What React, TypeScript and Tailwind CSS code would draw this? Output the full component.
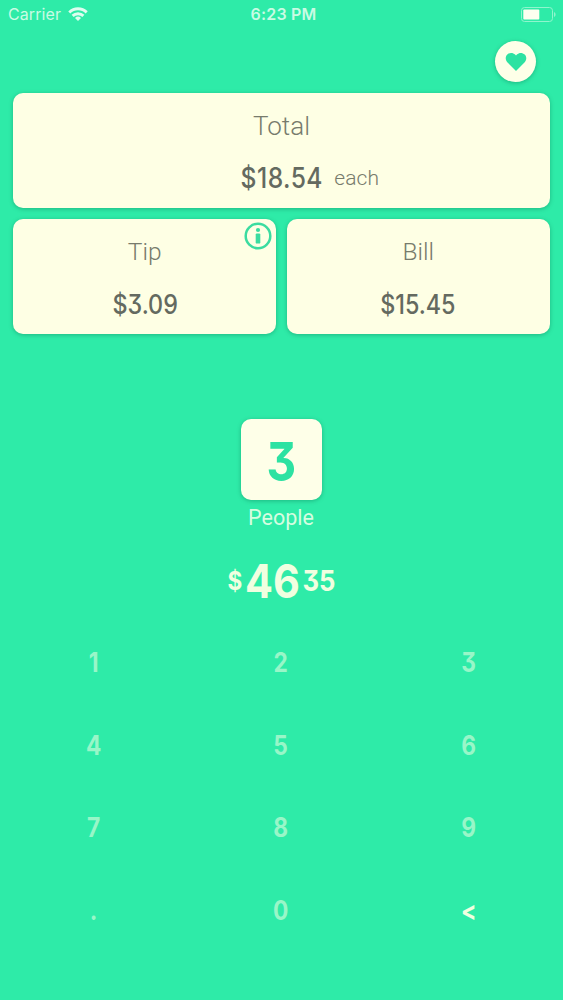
import React from "react";
import clsx from "clsx";

type AmountCardProps = {
  label: string;
  amount: string;
  amountClass: string;
  labelClass: string;
  suffix?: string;
  info?: boolean;
};

const keys = ["1", "2", "3", "4", "5", "6", "7", "8", "9", ".", "0", "<"];

const WifiIcon = () => (
  <svg width="20" height="14" viewBox="0 0 20 14" fill="none" stroke="#dffdf0" strokeWidth="2.9">
    <path d="M1.3 5.4a12.3 12.3 0 0 1 17.4 0" />
    <path d="M4.6 8.9a7.7 7.7 0 0 1 10.8 0" />
    <path d="M10 14 7 11a4.3 4.3 0 0 1 6 0z" fill="#dffdf0" stroke="none" />
  </svg>
);

const BatteryIcon = () => (
  <svg width="35" height="15" viewBox="0 0 35 15" fill="none">
    <rect x="0.5" y="0.5" width="31" height="14" rx="3" stroke="#8ff5cd" />
    <rect x="2.3" y="2.5" width="16" height="10" rx="1" fill="#fcfff0" />
    <path d="M33 5v5c1-.4 1.6-1.4 1.6-2.5S34 5.4 33 5z" fill="#8ff5cd" />
  </svg>
);

const HeartIcon = () => (
  <svg width="22" height="20" viewBox="0 0 22 20" fill="#2de2a2">
    <path d="M11 19 2.3 10.3C.2 8.1.2 4.6 2.3 2.5 4.5.4 8 .4 10.1 2.5l.9.9.9-.9c2.1-2.1 5.6-2.1 7.8 0 2.1 2.1 2.1 5.6 0 7.8z" />
  </svg>
);

const InfoIcon = () => (
  <svg width="28" height="28" viewBox="0 0 28 28" fill="none">
    <circle cx="14" cy="14" r="12.3" stroke="#3bdca0" strokeWidth="2.5" />
    <circle cx="14" cy="8" r="2.1" fill="#3bdca0" />
    <rect x="11.7" y="11.4" width="4.6" height="10.2" rx="1.2" fill="#3bdca0" />
  </svg>
);

const AmountCard: React.FC<AmountCardProps> = ({ label, amount, amountClass, labelClass, suffix, info }) => (
  <div className="relative h-[115px] flex-1 rounded-[10px] bg-[#feffe4] pt-[18px] text-center shadow-[0_1px_4px_rgba(0,90,60,0.35)]">
    {info && (
      <div className="absolute top-[3px] right-[4px]">
        <InfoIcon />
      </div>
    )}
    <div className={clsx("h-[30px] font-light leading-[30px] text-[#777b6c]", labelClass)}>{label}</div>
    <div className="mt-[22px] grid h-[30px] grid-cols-[1fr_auto_1fr] items-start leading-[30px]">
      <span />
      <span
        className={clsx(
          "scale-x-[0.88] font-[Inter,sans-serif] font-medium text-[#646a60] [font-feature-settings:'cv09']",
          amountClass,
        )}
      >
        {amount}
      </span>
      {suffix ? (
        <span className="pl-[6px] text-left text-[21px] font-light tracking-[0.1px] text-[#777b6c]">{suffix}</span>
      ) : (
        <span />
      )}
    </div>
  </div>
);

const App: React.FC = () => {
  return (
    <div className="h-[1000px] w-[563px] overflow-hidden bg-[#2eeba8] font-[Roboto,sans-serif]">
      {/* Status bar */}
      <header className="grid h-[28px] grid-cols-3 items-center pr-[7px] pl-[8px] font-[Inter,sans-serif] text-[#c9fbe4]">
        <div className="flex items-center gap-[7px]">
          <span className="text-[16px] tracking-[0.1px]">Carrier</span>
          <WifiIcon />
        </div>
        <span className="pl-[3px] text-center text-[16px] font-semibold tracking-[0.2px]">6:23 PM</span>
        <div className="flex justify-end">
          <BatteryIcon />
        </div>
      </header>

      <div className="flex justify-end pt-[12.5px] pr-[27px]">
        <button className="flex size-[41px] items-center justify-center rounded-full bg-[#feffe8] pt-px shadow-[0_1px_4px_rgba(0,90,60,0.35)]">
          <HeartIcon />
        </button>
      </div>

      {/* Amounts */}
      <section className="flex flex-col gap-[11px] px-[13.4px] pt-[11px]">
        <div className="flex">
          <AmountCard
            label="Total"
            amount="$18.54"
            suffix="each"
            labelClass="text-[26px]"
            amountClass="text-[28px] tracking-[0.5px]"
          />
        </div>
        <div className="flex gap-[11px]">
          <AmountCard label="Tip" amount="$3.09" info labelClass="text-[24.5px]" amountClass="text-[26.5px]" />
          <AmountCard label="Bill" amount="$15.45" labelClass="text-[24.5px]" amountClass="text-[26.5px]" />
        </div>
      </section>

      {/* Party size */}
      <section className="flex flex-col items-center pt-[85px]">
        <div className="flex size-[81px] items-center justify-center rounded-[10px] bg-[#feffe8] pt-[5px] font-[Inter,sans-serif] text-[54px] leading-none font-bold text-[#2de2a2] shadow-[0_1px_4px_rgba(0,90,60,0.35)] [font-feature-settings:'cv09']">
          <span className="scale-x-[0.85]">3</span>
        </div>
        <div className="mt-[4px] h-[28px] pr-px text-[21.5px] leading-[28px] text-[#d5fde0]">People</div>
      </section>

      <div className="mt-[29.5px] flex h-[40px] scale-x-[0.9] items-start justify-center font-[Inter,sans-serif] font-bold text-[#f0ffe0] [font-feature-settings:'cv09']">
        <span className="mt-[7px] text-[25px] leading-[26px]">$</span>
        <span className="ml-[3px] text-[46px] leading-[40px]">46</span>
        <span className="ml-[3px] mt-[7px] text-[28.5px] leading-[26px]">35</span>
      </div>

      {/* Keypad */}
      <div className="mt-[20px] grid grid-cols-3 pr-px font-[Inter,sans-serif] text-[26.5px] font-bold [font-feature-settings:'cv09']">
        {keys.map((key) => (
          <button
            key={key}
            className={clsx(
              "h-[82.5px] scale-x-[0.86] leading-[82.5px]",
              key === "<" ? "text-[#f0ffe0]" : "text-[#98f6c8]",
            )}
          >
            {key}
          </button>
        ))}
      </div>
    </div>
  );
};

export default App;
